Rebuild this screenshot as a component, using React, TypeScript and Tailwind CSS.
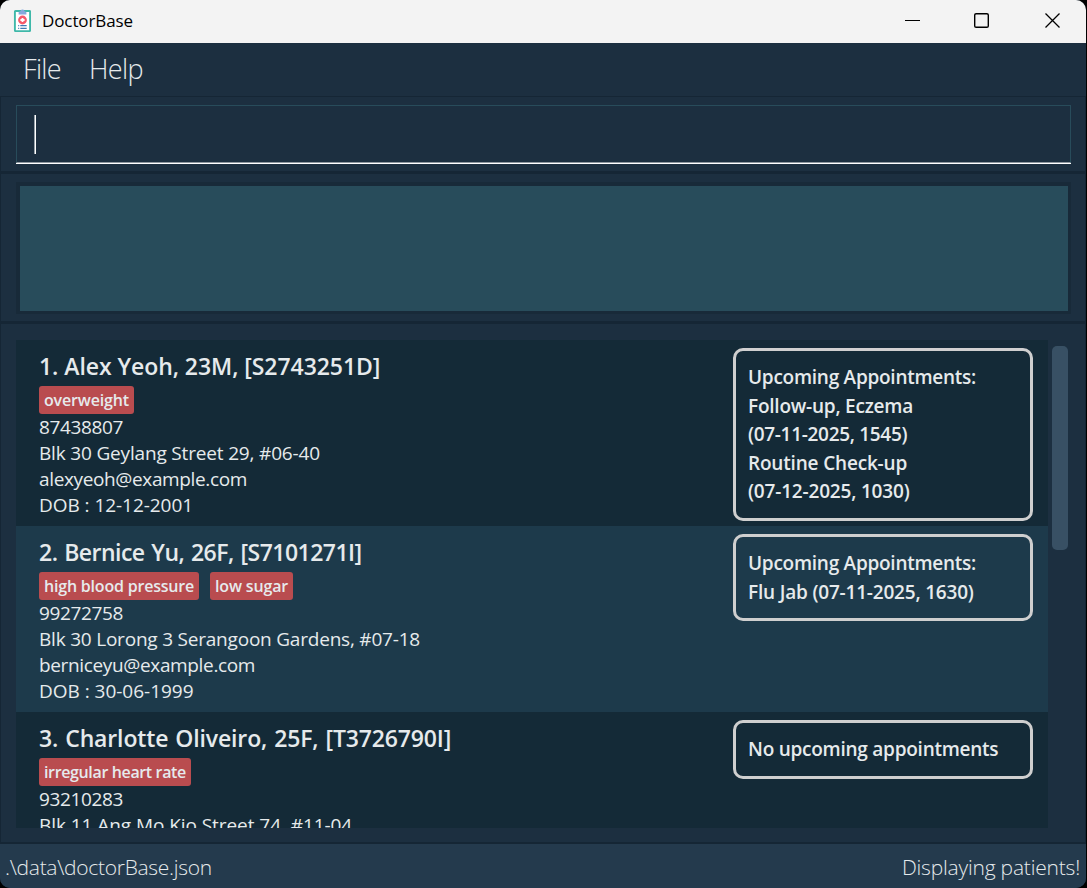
type Line = { text: string; tracking: string };
type Patient = { name: Line; tags: Line[]; lines: Line[]; appointments: Line[] };

const patients: Patient[] = [
  {
    name: { text: "1. Alex Yeoh, 23M, [S2743251D]", tracking: "tracking-[-0.06px]" },
    tags: [{ text: "overweight", tracking: "tracking-[-0.15px]" }],
    lines: [
      { text: "87438807", tracking: "tracking-[-0.36px]" },
      { text: "Blk 30 Geylang Street 29, #06-40", tracking: "tracking-[-0.17px]" },
      { text: "alexyeoh@example.com", tracking: "tracking-[-0.36px]" },
      { text: "DOB : 12-12-2001", tracking: "tracking-[-0.05px]" },
    ],
    appointments: [
      { text: "Upcoming Appointments:", tracking: "tracking-[-0.26px]" },
      { text: "Follow-up, Eczema", tracking: "tracking-[-0.22px]" },
      { text: "(07-11-2025, 1545)", tracking: "tracking-[-0.31px]" },
      { text: "Routine Check-up", tracking: "tracking-[-0.18px]" },
      { text: "(07-12-2025, 1030)", tracking: "tracking-[-0.18px]" },
    ],
  },
  {
    name: { text: "2. Bernice Yu, 26F, [S7101271I]", tracking: "tracking-[-0.52px] [word-spacing:1.3px]" },
    tags: [
      { text: "high blood pressure", tracking: "tracking-[-0.2px]" },
      { text: "low sugar", tracking: "tracking-[-0.16px]" },
    ],
    lines: [
      { text: "99272758", tracking: "tracking-[-0.36px]" },
      { text: "Blk 30 Lorong 3 Serangoon Gardens, #07-18", tracking: "tracking-[-0.21px]" },
      { text: "berniceyu@example.com", tracking: "tracking-[-0.35px]" },
      { text: "DOB : 30-06-1999", tracking: "tracking-[-0.02px]" },
    ],
    appointments: [
      { text: "Upcoming Appointments:", tracking: "tracking-[-0.26px]" },
      { text: "Flu Jab (07-11-2025, 1630)", tracking: "tracking-[-0.19px]" },
    ],
  },
  {
    name: { text: "3. Charlotte Oliveiro, 25F, [T3726790I]", tracking: "tracking-[-0.14px] [word-spacing:1.2px]" },
    tags: [{ text: "irregular heart rate", tracking: "tracking-[-0.36px]" }],
    lines: [
      { text: "93210283", tracking: "tracking-[-0.36px]" },
      { text: "Blk 11 Ang Mo Kio Street 74, #11-04", tracking: "tracking-[-0.06px]" },
    ],
    appointments: [{ text: "No upcoming appointments", tracking: "tracking-[-0.25px]" }],
  },
];

function AppIcon() {
  return (
    <svg width="18" height="25" viewBox="0 0 18 25">
      <rect x="1.9" y="3" width="15.2" height="20.1" rx="0.6" fill="#fff" stroke="#3fb8a9" strokeWidth="1.9" />
      <path d="M5.6 6.4V4.2l2-1.2a2 2 0 0 1 3.8 0l2 1.2v2.2z" fill="#86a9dd" />
      <circle cx="9.5" cy="12" r="4.4" fill="#f5596a" />
      <path d="M9.5 9.9v4.2M7.4 12h4.2" stroke="#fff" strokeWidth="1.8" />
      <path d="M5.2 17.7h1M7.3 17.7h6.4M5.2 20.4h1M7.3 20.4h6.4" stroke="#3f78b5" strokeWidth="1.3" />
    </svg>
  );
}

function TitleBar() {
  return (
    <header className="flex h-[43px] shrink-0 items-start bg-[#f3f3f3] pl-[13px] text-black">
      <div className="pt-2">
        <AppIcon />
      </div>
      <span className="ml-[11px] pt-[9px] text-[17px] leading-6 tracking-[-0.1px]">DoctorBase</span>
      <svg className="ml-auto mr-[25px] mt-[12px]" width="156" height="17" viewBox="0 0 156 17" fill="none" stroke="#000">
        <path d="M0 8.5h15" />
        <rect x="69.7" y="1.7" width="13.6" height="13.6" rx="1.4" strokeWidth="1.4" />
        <path d="M140.5 1.5l14 14M154.5 1.5l-14 14" strokeWidth="1.3" />
      </svg>
    </header>
  );
}

function PatientCard({ patient, alt }: { patient: Patient; alt: boolean }) {
  return (
    <li className={`flex h-[186px] shrink-0 justify-between pl-[23px] pr-[15px] ${alt ? "bg-[#1d3a4b]" : "bg-[#142a37]"}`}>
      <div className="pt-[10px]">
        <h2 className={`h-9 text-[23px] font-[560] leading-8 ${patient.name.tracking}`}>{patient.name.text}</h2>
        <div className="flex h-7 gap-[11px]">
          {patient.tags.map((tag) => (
            <span key={tag.text} className={`h-7 rounded-[3px] bg-[#b94c4f] px-[5px] text-base font-[560] leading-7 ${tag.tracking}`}>
              {tag.text}
            </span>
          ))}
        </div>
        {patient.lines.map((line) => (
          <p key={line.text} className={`text-[19px] leading-[26px] ${line.tracking}`}>
            {line.text}
          </p>
        ))}
      </div>
      <div className="mt-2 w-[300px] self-start rounded-[10px] border-[3px] border-[#cfcfcf] px-3 py-3 text-[19px] font-[560] leading-[28.6px]">
        {patient.appointments.map((line) => (
          <p key={line.text} className={line.tracking}>
            {line.text}
          </p>
        ))}
      </div>
    </li>
  );
}

export default function App() {
  return (
    <div className="h-[888px] w-[1087px] overflow-hidden bg-black pr-px">
      <div className="flex h-full flex-col overflow-hidden rounded-[10px] bg-[#1c2f40] font-['Open_Sans','Noto_Sans',sans-serif] whitespace-nowrap text-[#e6eaec]">
        <TitleBar />
        <nav className="flex h-[53px] shrink-0 gap-[28px] pl-[23px] pt-[8px] text-[27px] font-light leading-9">
          <span className="tracking-[-0.65px]">File</span>
          <span className="tracking-[-0.6px]">Help</span>
        </nav>
        <section className="h-[77px] shrink-0 border border-b-2 border-[#152635] pl-[15px] pr-[14px] pt-2">
          <div className="flex h-[59px] flex-col border-b border-white">
            <div className="grow border border-[#284c5b] border-b-[#8e979f] pl-[17px] pt-[9px]">
              <div className="h-[39px] w-[2px] border-l border-[#98a2aa] bg-white" />
            </div>
          </div>
        </section>
        <section className="h-[150px] shrink-0 border border-b-2 border-[#152635] pl-[15px] pr-[14px] pt-2">
          <div className="h-[132px] border-[3px] border-l-4 border-t-4 border-[#182a39] bg-[#284c5b]" />
        </section>
        <section className="flex h-[521px] shrink-0 border border-b-2 border-[#152635] pb-[14px] pl-[15px] pt-[16px]">
          <ul className="flex w-[1032px] flex-col overflow-hidden">
            {patients.map((patient, index) => (
              <PatientCard key={patient.name.text} patient={patient} alt={index % 2 === 1} />
            ))}
          </ul>
          <div className="ml-[4px] mt-[6px] h-[204px] w-4 rounded-[5px] bg-[#385064]" />
        </section>
        <footer className="flex flex-1 justify-between bg-[#243a4d] pl-[5px] pr-[6px] pt-[7px] text-[21px] font-light leading-8">
          <span className="tracking-[-0.29px]">.\data\doctorBase.json</span>
          <span className="tracking-[-0.2px]">Displaying patients!</span>
        </footer>
      </div>
    </div>
  );
}
